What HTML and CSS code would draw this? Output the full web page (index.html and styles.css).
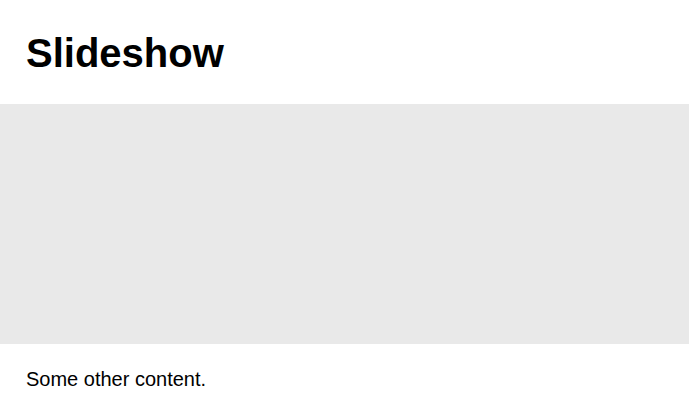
FILE: index.html
```html
<!DOCTYPE html>
<html lang="en">
<head>
<meta charset="utf-8">
<title>Slideshow</title>
<link rel="stylesheet" href="styles.css">
</head>
<body>
<header class="page-header">
  <h1 class="title">Slideshow</h1>
</header>
<section class="slideshow" aria-label="Slideshow"></section>
<main class="content">
  <p class="text">Some other content.</p>
</main>
</body>
</html>
```
FILE: styles.css
```css
html, body {
  margin: 0;
  padding: 0;
  background: #ffffff;
  color: #000000;
  font-family: "Liberation Sans", Arial, Helvetica, sans-serif;
}

.page-header {
  padding: 30px 26px 28px;
}

.title {
  margin: 0;
  font-size: 40px;
  font-weight: 700;
  line-height: 46px;
}

.slideshow {
  height: 240px;
  background: #e9e9e9;
}

.content {
  padding: 24px 26px 0;
}

.text {
  margin: 0;
  font-size: 20px;
  line-height: 23px;
}
```
